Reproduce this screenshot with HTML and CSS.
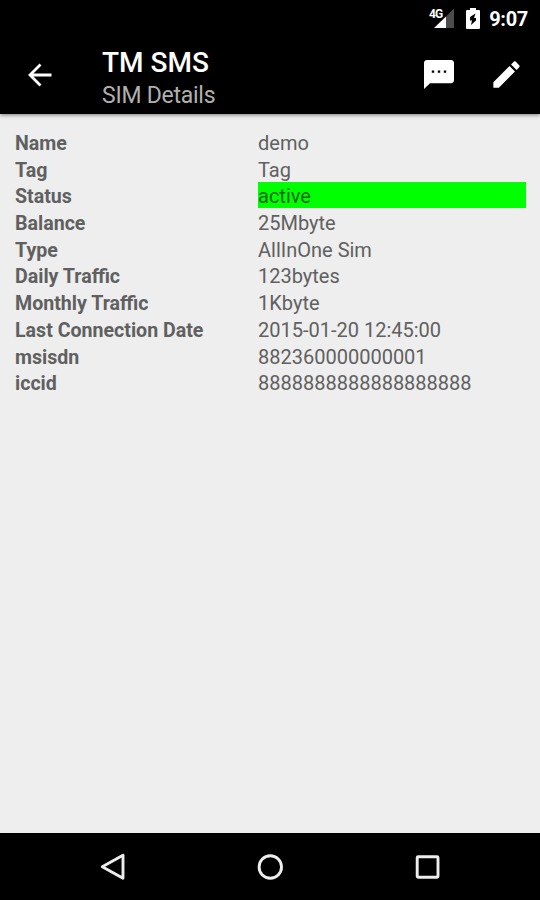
FILE: index.html
```html
<!DOCTYPE html>
<html lang="en">

<head>
    <title>TM SMS</title>
    <meta charset="UTF-8">
    <link rel="stylesheet" href="styles.css">
</head>

<body>
    <div class="status-bar">
        <svg class="signal" width="26" height="22" viewBox="0 0 26 22">
            <path d="M5 21 L17 9.5 V21 Z" fill="#fff"/>
            <path d="M17 9.5 L25 1.5 V21 H17 Z" fill="#4c4c4c"/>
            <text x="0" y="11" class="network">4G</text>
        </svg>
        <svg class="battery" width="14" height="21" viewBox="0 0 14 21">
            <path d="M4 0 H10 V2 H13 Q14 2 14 3 V20 Q14 21 13 21 H1 Q0 21 0 20 V3 Q0 2 1 2 H4 Z" fill="#fff"/>
            <path d="M9.500 5.500 L4 9 V12.500 H6 L5 17 L10 12.500 V10 H8 Z" fill="#000"/>
        </svg>
        <span class="clock">9:07</span>
    </div>

    <div class="toolbar">
        <svg class="back" width="24" height="24" viewBox="0 0 24 24">
            <path d="M12.500 1.500 L2 12 L12.500 22.500 M2 12 H23.500" fill="none" stroke="#fff" stroke-width="2.800"/>
        </svg>
        <div class="titles">
            <h1>TM SMS</h1>
            <p>SIM Details</p>
        </div>
        <svg class="message" width="36" height="35" viewBox="0 0 24 24" preserveAspectRatio="none">
            <path d="M20 2H4c-1.100 0-1.990.9-1.990 2L2 22l4-4h14c1.100 0 2-.9 2-2V4c0-1.100-.9-2-2-2zM8.800 10.800H7.200V9.200h1.600v1.600zm4 0h-1.600V9.200h1.600v1.600zm4 0h-1.600V9.200h1.600v1.600z" fill="#fff"/>
        </svg>
        <svg class="edit" width="35" height="35" viewBox="0 0 24 24">
            <path d="M3 17.250V21h3.750L17.810 9.940l-3.750-3.750L3 17.250zM20.710 7.040c.39-.39.39-1.020 0-1.410l-2.340-2.340c-.39-.39-1.020-.39-1.410 0l-1.830 1.830 3.750 3.750 1.830-1.830z" fill="#fff"/>
        </svg>
    </div>

    <dl class="details">
        <dt>Name</dt>
        <dd>demo</dd>
        <dt>Tag</dt>
        <dd>Tag</dd>
        <dt>Status</dt>
        <dd class="active">active</dd>
        <dt>Balance</dt>
        <dd>25Mbyte</dd>
        <dt>Type</dt>
        <dd>AllInOne Sim</dd>
        <dt>Daily Traffic</dt>
        <dd>123bytes</dd>
        <dt>Monthly Traffic</dt>
        <dd>1Kbyte</dd>
        <dt>Last Connection Date</dt>
        <dd>2015-01-20 12:45:00</dd>
        <dt>msisdn</dt>
        <dd>882360000000001</dd>
        <dt>iccid</dt>
        <dd>8888888888888888888</dd>
    </dl>

    <div class="nav-bar">
        <svg width="28" height="28" viewBox="0 0 28 28">
            <path d="M24 2.200 V25.200 L3.300 13.700 Z"/>
        </svg>
        <svg width="28" height="28" viewBox="0 0 28 28">
            <circle cx="14.300" cy="14" r="11.200"/>
        </svg>
        <svg width="28" height="28" viewBox="0 0 28 28">
            <rect x="4.200" y="3.700" width="20.800" height="20.600" rx="1"/>
        </svg>
    </div>
</body>

</html>
```
FILE: styles.css
```css
* {
    margin: 0;
    padding: 0;
    box-sizing: border-box;
}

body {
    display: flex;
    flex-direction: column;
    width: 540px;
    height: 900px;
    font-family: Roboto, sans-serif;
    color: #606060;
    background: #eee;
    overflow: hidden;
}

.status-bar {
    display: flex;
    justify-content: flex-end;
    align-items: center;
    height: 37px;
    padding-right: 12px;
    background: #000;
}

.network {
    font-size: 12px;
    font-weight: 700;
    letter-spacing: -1px;
    fill: #fff;
}

.signal {
    margin: -1px 11px 0 0;
}

.battery {
    margin-right: 9px;
}

.clock {
    font-size: 20px;
    font-weight: 700;
    letter-spacing: -0.3px;
    line-height: 37px;
    padding-top: 2px;
    color: #fff;
}

.toolbar {
    display: flex;
    align-items: center;
    height: 77px;
    padding: 0 16px 2px 28px;
    background: #000;
    box-shadow: 0 1px 4px rgba(0,0,0,0.5);
}

.titles {
    flex: 1;
    margin: 6px 0 0 50px;
}

.titles h1 {
    font-size: 28px;
    font-weight: 500;
    line-height: 36px;
    color: #fff;
}

.titles p {
    font-size: 23px;
    letter-spacing: -0.25px;
    line-height: 30px;
    color: #b0b0b0;
}

.message {
    margin-right: 32px;
}

.details {
    flex: 1;
    display: grid;
    grid-template-columns: 243px 268px;
    grid-auto-rows: 26.7px;
    padding: 15px 14px 0 15px;
    font-size: 20px;
    line-height: 29px;
}

/* keep the ffi ligature, so only the font size is tightened */
.details dt {
    font-size: 19.6px;
    font-weight: 700;
}

.details .active {
    height: 26px;
    color: #0a6a0a;
    background: #0f0;
}

.nav-bar {
    display: flex;
    justify-content: center;
    align-items: center;
    gap: 129px;
    height: 67px;
    background: #000;
}

.nav-bar svg {
    fill: none;
    stroke: #eee;
    stroke-width: 2.9;
    stroke-linejoin: round;
}
```
